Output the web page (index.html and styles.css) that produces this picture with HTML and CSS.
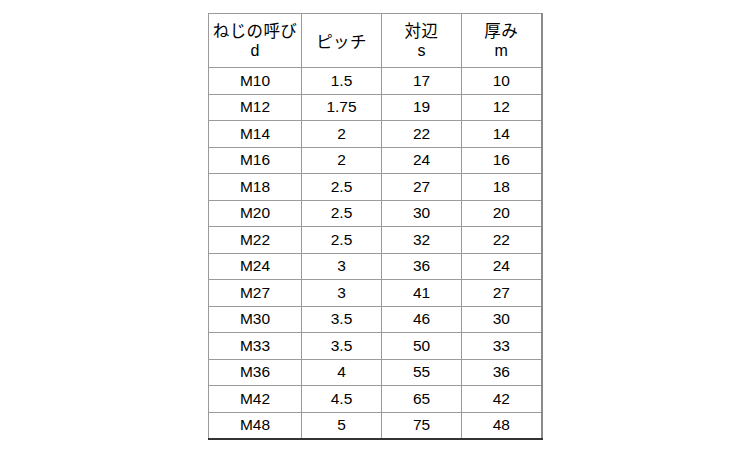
FILE: index.html
```html
<!DOCTYPE html>
<html lang="ja">
<head>
<meta charset="utf-8">
<link rel="stylesheet" href="styles.css">
</head>
<body>
<table class="spec">
  <colgroup>
    <col class="c1"><col class="c2"><col class="c3"><col class="c4">
  </colgroup>
  <thead>
    <tr>
      <th><span class="jp">ねじの呼び</span><span class="sym">d</span></th>
      <th><span class="jp">ピッチ</span></th>
      <th><span class="jp">対辺</span><span class="sym">s</span></th>
      <th><span class="jp">厚み</span><span class="sym">m</span></th>
    </tr>
  </thead>
  <tbody>
    <tr><td>M10</td><td>1.5</td><td>17</td><td>10</td></tr>
    <tr><td>M12</td><td>1.75</td><td>19</td><td>12</td></tr>
    <tr><td>M14</td><td>2</td><td>22</td><td>14</td></tr>
    <tr><td>M16</td><td>2</td><td>24</td><td>16</td></tr>
    <tr><td>M18</td><td>2.5</td><td>27</td><td>18</td></tr>
    <tr><td>M20</td><td>2.5</td><td>30</td><td>20</td></tr>
    <tr><td>M22</td><td>2.5</td><td>32</td><td>22</td></tr>
    <tr><td>M24</td><td>3</td><td>36</td><td>24</td></tr>
    <tr><td>M27</td><td>3</td><td>41</td><td>27</td></tr>
    <tr><td>M30</td><td>3.5</td><td>46</td><td>30</td></tr>
    <tr><td>M33</td><td>3.5</td><td>50</td><td>33</td></tr>
    <tr><td>M36</td><td>4</td><td>55</td><td>36</td></tr>
    <tr><td>M42</td><td>4.5</td><td>65</td><td>42</td></tr>
    <tr><td>M48</td><td>5</td><td>75</td><td>48</td></tr>
  </tbody>
</table>
</body>
</html>
```
FILE: styles.css
```css
html, body {
  margin: 0;
  padding: 0;
  background: #ffffff;
}
body {
  padding-top: 13px;
  font-family: "Liberation Sans", Arial, "Noto Sans CJK JP", sans-serif;
  color: #000;
}
.spec {
  margin: 0 0 0 208px;
  border-collapse: collapse;
  table-layout: fixed;
  width: 334px;
  border-top: 1px solid #a8a8a8;
  border-left: 1px solid #a8a8a8;
  border-right: 2px solid #8a8a8a;
  border-bottom: 2px solid #333;
}
.c1 { width: 93px; }
.c2 { width: 80px; }
.c3 { width: 80px; }
.c4 { width: 80px; }
.spec th, .spec td {
  border: 1px solid #9a9a9a;
  padding: 0;
  text-align: center;
  vertical-align: middle;
  font-weight: normal;
}
.spec th {
  height: 53px;
}
.spec td {
  height: 25.5px;
  font-size: 15.5px;
  line-height: 18px;
}
.jp {
  display: block;
  font-family: "Noto Sans CJK JP", sans-serif;
  font-size: 16.5px;
  line-height: 20px;
  letter-spacing: 0.4px;
}
.sym {
  display: block;
  font-size: 16px;
  line-height: 22px;
}
```
